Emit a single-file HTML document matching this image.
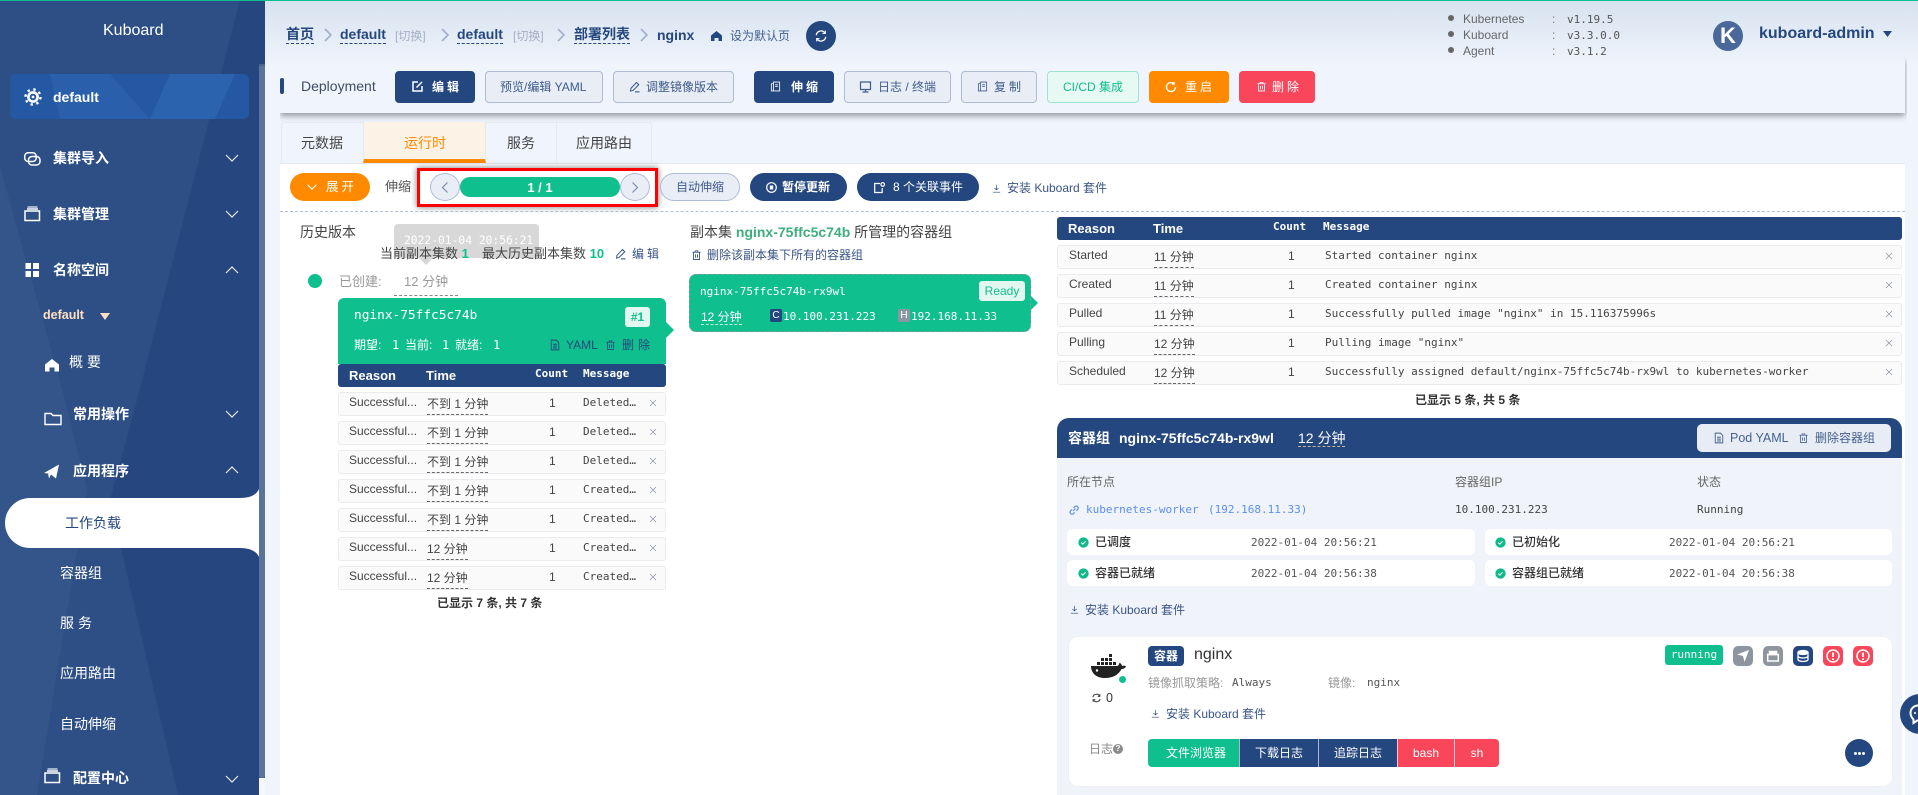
<!DOCTYPE html>
<html lang="zh"><head><meta charset="utf-8"><title>Kuboard</title>
<style>
html,body{margin:0;padding:0;width:1918px;height:795px;overflow:hidden;background:#f0f4fc}
body{position:relative;font-family:"Liberation Sans","Noto Sans CJK SC",sans-serif;font-size:12px;color:#333}
div,span.a,svg.i{position:absolute}
.t{position:absolute;white-space:nowrap;line-height:20px;height:20px}
.m{font-family:"DejaVu Sans Mono","Liberation Mono","Noto Sans CJK SC",monospace;font-size:11px}
.b{font-weight:700}
.n{color:#25477f}
.mi{color:#fff;font-weight:700;font-size:14px;left:53px}
.si{color:#fff;font-size:14px}
.btn{position:absolute;top:71px;height:32px;box-sizing:border-box;border-radius:4px}
.pl{background:#e9edf6;border:1px solid #aebbd5}
.nv{background:#25477f}
.rb{position:absolute;height:28px;top:173px;border-radius:14px;box-sizing:border-box}
.r{position:absolute;height:24px;box-sizing:border-box;background:#fafafa;border:1px solid #e9ebef;border-radius:3px}
.h{position:absolute;background:#25477f;border-radius:3px}
.dash{border-bottom:1px dashed #666;height:19px;line-height:19px}
svg.i{overflow:visible;fill:none;stroke:currentColor;stroke-width:1.2}
.x{color:#7f8c9a}
.cd{position:absolute;background:#fff;border-radius:6px;height:26px}
.sq{position:absolute;top:646px;width:20px;height:20px;border-radius:5px}
.lb{position:absolute;top:739px;height:28px;color:#fff;text-align:center;line-height:28px;font-size:12px;box-sizing:border-box}
</style></head><body>
<svg width="0" height="0" style="position:absolute">
<defs>
<symbol id="trash" viewBox="0 0 16 16"><path d="M2 4h12M6 4V2h4v2M3.5 4v10.5h9V4M6.5 7v5M9.5 7v5"/></symbol>
<symbol id="doc" viewBox="0 0 16 16"><path d="M3 1.5h7l3 3v10H3zM5.5 7h5M5.5 9.5h5M5.5 12h5"/></symbol>
<symbol id="pen" viewBox="0 0 16 16"><path d="M10 2l3 3-7.5 7.5-3.5 1 .7-3.8zM8 14.5h6"/></symbol>
<symbol id="dl" viewBox="0 0 16 16"><path d="M8 1.5v9M4.2 7L8 10.5 11.8 7M1.5 14.5h13"/></symbol>
<symbol id="copy" viewBox="0 0 16 16"><path d="M5 1.5h9v13H5zM5 4H2v10.5h3M7.5 5.5h4M7.5 8h4"/></symbol>
<symbol id="x" viewBox="0 0 16 16"><path d="M2 2l12 12M14 2L2 14"/></symbol>
<symbol id="chk" viewBox="0 0 16 16"><circle cx="8" cy="8" r="7.5" fill="#10b98a" stroke="none"/><path d="M4.8 8.2l2.2 2.2 4-4" stroke="#fff" stroke-width="1.6"/></symbol>
<symbol id="dn" viewBox="0 0 14 8"><path d="M1 1l6 6 6-6"/></symbol>
<symbol id="up" viewBox="0 0 14 8"><path d="M1 7l6-6 6 6"/></symbol>
</defs></svg>

<!-- top green line -->
<div style="left:0;top:0;width:1918px;height:1px;background:#0fbf8f;z-index:9"></div>

<!-- main background gradient -->
<div style="left:265px;top:0;width:1653px;height:66px;background:linear-gradient(#d6e2ef,#f0f4fc)"></div>

<!-- sidebar -->
<svg class="a" style="position:absolute;left:0;top:0" width="265" height="795">
<rect width="265" height="795" fill="#25467f"/>
<polygon points="0,0 240,0 137,400 110,500 178,795 37,795 0,795" fill="#2d4f85"/>
<polygon points="0,167 65,400 87,490 37,795 0,795" fill="#34558a"/>
<rect x="259" y="64" width="6" height="714" rx="2" fill="#5b7299"/>
<rect x="259" y="778" width="6" height="17" fill="#f6f8fc"/>
<rect x="259" y="64" width="6" height="2" fill="#4a648f"/>
<path d="M5 523A25 25 0 0 1 30 498H240Q255 498 259 489V557Q255 548 240 548H30A25 25 0 0 1 5 523Z" fill="#fff"/>
<rect x="10" y="74" width="239" height="45" rx="6" fill="#2558a3"/>
<polygon points="50,74 110,74 150,119 60,119" fill="#2a60ab"/>
<polygon points="170,74 235,74 215,119 150,119" fill="#2b63ae"/>
<g transform="translate(33,97)" fill="none" stroke="#fff">
<circle r="7.5" stroke-width="2.4" stroke-dasharray="2.4 3.5"/><circle r="4.6" stroke-width="2.6"/><circle r="1.4" fill="#fff" stroke="none"/></g>
<g fill="none" stroke="#fff" stroke-width="1.5">
<rect x="24.700" y="152.700" width="11.500" height="8.800" rx="3.500"/>
<rect x="28.500" y="156.500" width="11.500" height="8.500" rx="3.500"/>
<rect x="25" y="211" width="14.500" height="9.500"/>
<path d="M27 209h11"/><path d="M27.500 207h10" stroke="#c8d3e6"/>
<path d="M45 424.500v-11h6l2 2h8v9z" stroke-width="1.400"/>
<rect x="45" y="773" width="14.500" height="9.500"/>
<path d="M47 771h11"/><path d="M47.500 769h10" stroke="#c8d3e6"/>
</g>
<g fill="#fff">
<rect x="25.500" y="263" width="5.500" height="6"/><rect x="33" y="263" width="6" height="6"/>
<rect x="25.500" y="271" width="5.500" height="6"/><rect x="33" y="271" width="6" height="6"/>
<path d="M45 364.500l7-5.500 7 5.500v7h-4.500v-4h-5v4H45z"/>
<path d="M59 464.500l-3 14-5-4-2 4-1-5.500zM44 473l15-8.500-11 9z"/>
<polygon points="100,313 110,313 105,320" fill="#fde0c4"/>
</g>
<g fill="none" stroke="#e6ecf5" stroke-width="1.200">
<path d="M226 155l6 6 6-6M226 211l6 6 6-6M226 273l6-6 6 6M226 411l6 6 6-6M226 473l6-6 6 6M226 776l6 6 6-6"/>
</g>
</svg>
<div class="t" style="left:103px;top:21px;color:#fff;font-size:16px">Kuboard</div>
<div class="t b" style="left:53px;top:87px;color:#fff;font-size:14px">default</div>
<div class="t mi" style="top:148px">集群导入</div>
<div class="t mi" style="top:204px">集群管理</div>
<div class="t mi" style="top:260px">名称空间</div>
<div class="t b" style="left:43px;top:305px;color:#fde0c4;font-size:12.500px">default</div>
<div class="t si" style="left:69px;top:352px;letter-spacing:4px">概要</div>
<div class="t mi" style="left:73px;top:404px">常用操作</div>
<div class="t mi" style="left:73px;top:461px">应用程序</div>
<div class="t n" style="left:65px;top:513px;font-size:14px">工作负载</div>
<div class="t si" style="left:60px;top:563px;">容器组</div>
<div class="t si" style="left:60px;top:613px;letter-spacing:4px">服务</div>
<div class="t si" style="left:60px;top:663px">应用路由</div>
<div class="t si" style="left:60px;top:714px">自动伸缩</div>
<div class="t mi" style="left:73px;top:768px">配置中心</div>

<!-- breadcrumb -->
<div class="t b n dash" style="left:286px;top:25px;height:18px;font-size:14px;border-bottom-color:#25477f">首页</div>
<div class="t b n dash" style="left:340px;top:25px;height:18px;font-size:14px;border-bottom-color:#25477f">default</div>
<div class="t" style="left:395px;top:26px;color:#a5b0c5;font-size:12px">[切换]</div>
<div class="t b n dash" style="left:457px;top:25px;height:18px;font-size:14px;border-bottom-color:#25477f">default</div>
<div class="t" style="left:513px;top:26px;color:#a5b0c5;font-size:12px">[切换]</div>
<div class="t b n dash" style="left:574px;top:25px;height:18px;font-size:14px;border-bottom-color:#25477f">部署列表</div>
<div class="t b n" style="left:657px;top:25px;font-size:14px">nginx</div>
<svg class="i" style="left:324px;top:28px;color:#9fb0cb;stroke-width:1.600" width="8" height="14" viewBox="0 0 8 14"><path d="M1 1l6 6-6 6"/></svg>
<svg class="i" style="left:441px;top:28px;color:#9fb0cb;stroke-width:1.600" width="8" height="14" viewBox="0 0 8 14"><path d="M1 1l6 6-6 6"/></svg>
<svg class="i" style="left:557px;top:28px;color:#9fb0cb;stroke-width:1.600" width="8" height="14" viewBox="0 0 8 14"><path d="M1 1l6 6-6 6"/></svg>
<svg class="i" style="left:640px;top:28px;color:#9fb0cb;stroke-width:1.600" width="8" height="14" viewBox="0 0 8 14"><path d="M1 1l6 6-6 6"/></svg>
<svg class="i" style="left:711px;top:31px;fill:#25477f;stroke:none" width="11" height="10" viewBox="0 0 11 10"><path d="M0 4.500L5.500 0 11 4.500V10H7.500V7h-4v3H0z"/></svg>
<div class="t" style="left:730px;top:26px;font-size:12px;color:#45618f">设为默认页</div>
<div style="left:806px;top:21px;width:30px;height:30px;border-radius:50%;background:#25477f"></div>
<svg class="i" style="left:815px;top:30px;color:#fff;stroke-width:1.500" width="12" height="12" viewBox="0 0 14 14"><path d="M1.500 6A5.500 5.500 0 0 1 11.500 3.500M12.500 8A5.500 5.500 0 0 1 2.500 10.500"/><path d="M12 .8v3.200H8.800M2 13.200V10h3.200" stroke-width="1.300"/></svg>

<!-- versions -->
<div style="left:1448px;top:15px;width:6px;height:6px;border-radius:50%;background:#666"></div>
<div style="left:1448px;top:31px;width:6px;height:6px;border-radius:50%;background:#666"></div>
<div style="left:1448px;top:47px;width:6px;height:6px;border-radius:50%;background:#666"></div>
<div class="t" style="left:1463px;top:9px;color:#666">Kubernetes</div>
<div class="t" style="left:1463px;top:25px;color:#666">Kuboard</div>
<div class="t" style="left:1463px;top:41px;color:#666">Agent</div>
<div class="t" style="left:1552px;top:9px;color:#777">:</div>
<div class="t" style="left:1552px;top:25px;color:#777">:</div>
<div class="t" style="left:1552px;top:41px;color:#777">:</div>
<div class="t m" style="left:1567px;top:10px;color:#555">v1.19.5</div>
<div class="t m" style="left:1567px;top:26px;color:#555">v3.3.0.0</div>
<div class="t m" style="left:1567px;top:42px;color:#555">v3.1.2</div>
<div style="left:1713px;top:21px;width:30px;height:30px;border-radius:50%;background:#4a6899;color:#fff;font-weight:700;font-size:22px;text-align:center;line-height:30px">K</div>
<div class="t b n" style="left:1759px;top:24px;font-size:16px">kuboard-admin</div>
<svg class="i" style="left:1883px;top:31px;fill:#25477f;stroke:none" width="9" height="6"><polygon points="0,0 9,0 4.500,6"/></svg>

<!-- toolbar -->
<div style="left:280px;top:58px;width:1625px;height:55px;box-shadow:0 3px 6px rgba(0,0,0,.38);clip-path:inset(0 -2px -14px 0)"></div>
<div style="left:280px;top:78px;width:4px;height:16px;background:#25477f;border-radius:2px"></div>
<div class="t" style="left:301px;top:76px;font-size:14px;color:#3f4d63">Deployment</div>

<div class="btn nv" style="left:395px;width:80px"></div>
<svg class="i" style="left:412px;top:81px;color:#fff;stroke-width:1.500" width="11" height="11" viewBox="0 0 11 11"><path d="M6 1H1v9h9V5M4.500 6.500L10 1"/></svg>
<div class="t b" style="left:432px;top:77px;color:#fff;letter-spacing:3px">编辑</div>

<div class="btn pl" style="left:485px;width:118px"></div>
<div class="t n" style="left:500px;top:77px;color:#3f5c8c">预览/编辑 YAML</div>

<div class="btn pl" style="left:613px;width:121px"></div>
<svg class="i n" style="left:629px;top:81px" width="12" height="12"><use href="#pen"/></svg>
<div class="t" style="left:646px;top:77px;color:#3f5c8c">调整镜像版本</div>

<div class="btn nv" style="left:754px;width:80px"></div>
<svg class="i" style="left:770px;top:81px;color:#fff" width="11" height="11"><use href="#copy"/></svg>
<div class="t b" style="left:791px;top:77px;color:#fff;letter-spacing:3px">伸缩</div>

<div class="btn pl" style="left:844px;width:107px"></div>
<svg class="i" style="left:860px;top:81px;color:#3f5c8c" width="11" height="12" viewBox="0 0 11 12"><path d="M.5 1h10v7.500H.5zM5.500 8.500V11M2.500 11h6"/></svg>
<div class="t" style="left:878px;top:77px;color:#3f5c8c">日志 / 终端</div>

<div class="btn pl" style="left:961px;width:76px"></div>
<svg class="i" style="left:977px;top:81px;color:#3f5c8c" width="11" height="11"><use href="#copy"/></svg>
<div class="t" style="left:994px;top:77px;color:#3f5c8c;letter-spacing:3px">复制</div>

<div class="btn" style="left:1047px;width:92px;background:#e6f9f3;border:1px solid #9be6ce"></div>
<div class="t" style="left:1063px;top:77px;color:#10bf8e">CI/CD 集成</div>

<div class="btn" style="left:1149px;width:80px;background:#ff8a00"></div>
<svg class="i" style="left:1166px;top:82px;color:#fff;stroke-width:1.400" width="10" height="10" viewBox="0 0 10 10"><path d="M9.500 5A4.500 4.500 0 1 1 7.500 1.300M8 0v2H6"/></svg>
<div class="t b" style="left:1185px;top:77px;color:#fff;letter-spacing:3px;font-weight:400">重启</div>

<div class="btn" style="left:1239px;width:76px;background:#f9465b"></div>
<svg class="i" style="left:1256px;top:81px;color:#fff" width="11" height="11"><use href="#trash"/></svg>
<div class="t" style="left:1272px;top:77px;color:#fff;letter-spacing:3px">删除</div>

<!-- tabs -->
<div style="left:281px;top:122px;width:371px;height:41px;box-sizing:border-box;border:1px solid #e6e9f0;border-bottom:0;border-radius:3px 3px 0 0"></div>
<div style="left:363px;top:122px;width:123px;height:41px;box-sizing:border-box;background:#fdf2e6;border-bottom:4px solid #ff8a00;border-left:1px solid #e6e9f0;border-right:1px solid #e6e9f0"></div>
<div style="left:556px;top:122px;width:1px;height:41px;background:#e6e9f0"></div>
<div class="t" style="left:301px;top:133px;font-size:14px;color:#444">元数据</div>
<div class="t" style="left:404px;top:133px;font-size:14px;color:#ff8a00">运行时</div>
<div class="t" style="left:507px;top:133px;font-size:14px;color:#444">服务</div>
<div class="t" style="left:576px;top:133px;font-size:14px;color:#444">应用路由</div>

<!-- white panel -->
<div style="left:280px;top:163px;width:1625px;height:632px;background:#fff;border-top:1px solid #e6e9f0;box-sizing:border-box"></div>

<!-- control row -->
<div class="rb" style="left:290px;width:80px;background:#ff8a00"></div>
<svg class="i" style="left:307px;top:184px;color:#fff;stroke-width:1.400" width="10" height="6"><use href="#dn"/></svg>
<div class="t" style="left:326px;top:177px;color:#fff;letter-spacing:3px;font-size:12.500px">展开</div>
<div class="t" style="left:385px;top:177px;font-size:13px;color:#555">伸缩</div>

<div style="left:417px;top:168px;width:241px;height:39px;box-sizing:border-box;border:3px solid #f00;background:#fff;box-shadow:0 0 6px rgba(0,0,0,.55)"></div>
<div style="left:430px;top:173px;width:30px;height:28px;box-sizing:border-box;border-radius:50%;background:#e9edf6;border:1px solid #aebbd5"></div>
<div style="left:620px;top:173px;width:30px;height:28px;box-sizing:border-box;border-radius:50%;background:#e9edf6;border:1px solid #aebbd5"></div>
<svg class="i" style="left:442px;top:182px;color:#6f84a8;stroke-width:1" width="6" height="11" viewBox="0 0 6 11"><path d="M5.500.5l-5 5 5 5"/></svg>
<svg class="i" style="left:632px;top:182px;color:#6f84a8;stroke-width:1" width="6" height="11" viewBox="0 0 6 11"><path d="M.5.500l5 5-5 5"/></svg>
<div style="left:460px;top:177px;width:160px;height:20px;border-radius:10px;background:#10bf8e;color:#fff;font-weight:700;font-size:13px;line-height:22px;text-align:center">1 / 1</div>

<div class="rb pl" style="left:660px;width:80px"></div>
<div class="t" style="left:676px;top:177px;color:#3f5c8c">自动伸缩</div>
<div class="rb nv" style="left:750px;width:97px"></div>
<svg class="i" style="left:766px;top:182px;color:#fff" width="11" height="11" viewBox="0 0 11 11"><circle cx="5.500" cy="5.500" r="4.800"/><rect x="3.800" y="3.500" width="3.400" height="4" fill="#fff" stroke="none"/></svg>
<div class="t b" style="left:782px;top:177px;color:#fff">暂停更新</div>
<div class="rb nv" style="left:857px;width:122px"></div>
<svg class="i" style="left:874px;top:182px;color:#fff" width="11" height="11" viewBox="0 0 11 11"><path d="M6 1.500H.7v9h7.500V6"/><circle cx="8.700" cy="2.500" r="1.800"/></svg>
<div class="t b" style="left:893px;top:177px;color:#fff;font-weight:400">8 个关联事件</div>
<svg class="i n" style="left:992px;top:184px" width="9" height="9"><use href="#dl"/></svg>
<div class="t n" style="left:1007px;top:178px;color:#3a5586">安装 Kuboard 套件</div>
<div style="left:280px;top:211px;width:1625px;height:0;border-top:1px dashed #b4bfd3"></div>

<!-- left column -->
<div class="t" style="left:300px;top:222px;font-size:14px;color:#444">历史版本</div>
<div style="left:394px;top:224px;width:145px;height:34px;background:#d8d8d8;border-radius:4px"></div>
<svg class="i" style="left:419px;top:258px;fill:#d8d8d8;stroke:none" width="14" height="7"><polygon points="0,0 14,0 7,7"/></svg>
<div class="t m" style="left:404px;top:231px;color:#fff;font-size:11.300px">2022-01-04 20:56:21</div>
<div class="t" style="left:380px;top:244px;font-size:13px;color:#444">当前副本集数 <span style="color:#10bf8e;font-weight:700">1</span></div>
<div class="t" style="left:482px;top:244px;font-size:13px;color:#444">最大历史副本集数 <span style="color:#10bf8e;font-weight:700">10</span></div>
<svg class="i n" style="left:615px;top:248px" width="12" height="12"><use href="#pen"/></svg>
<div class="t n" style="left:632px;top:244px;font-size:12px;letter-spacing:3px;color:#3a5586">编辑</div>
<div style="left:308px;top:274px;width:14px;height:14px;border-radius:50%;background:#10bf8e"></div>
<div class="t" style="left:339px;top:272px;font-size:13px;color:#999">已创建:</div>
<div class="t" style="left:404px;top:272px;font-size:13px;color:#999">12 分钟</div>
<div style="left:394px;top:295px;width:64px;border-top:1px dashed #888"></div>

<div style="left:338px;top:298px;width:328px;height:66px;background:#10bf8e;border-radius:6px 6px 0 0"></div>
<svg class="i" style="left:666px;top:322px;fill:#10bf8e;stroke:none" width="8" height="16"><polygon points="0,0 8,8 0,16"/></svg>
<div class="t m" style="left:354px;top:306px;color:#fff;font-size:12.800px">nginx-75ffc5c74b</div>
<div style="left:625px;top:307px;width:25px;height:20px;background:#e2f7f0;border-radius:3px;color:#10bf8e;text-align:center;line-height:20px;font-weight:700">#1</div>
<div class="t" style="left:354px;top:335px;color:#fff">期望:</div><div class="t m" style="left:392px;top:335px;color:#fff;font-size:12px">1</div>
<div class="t" style="left:405px;top:335px;color:#fff">当前:</div><div class="t m" style="left:442px;top:335px;color:#fff;font-size:12px">1</div>
<div class="t" style="left:455px;top:335px;color:#fff">就绪:</div><div class="t m" style="left:493px;top:335px;color:#fff;font-size:12px">1</div>
<svg class="i n" style="left:549px;top:339px" width="12" height="12"><use href="#doc"/></svg>
<div class="t n" style="left:566px;top:335px">YAML</div>
<svg class="i n" style="left:605px;top:339px" width="11" height="12"><use href="#trash"/></svg>
<div class="t n" style="left:622px;top:335px;letter-spacing:4px">删除</div>

<div class="h" style="left:338px;top:364px;width:328px;height:23px"></div>
<div class="t b" style="left:349px;top:366px;color:#fff;font-size:13px">Reason</div>
<div class="t b" style="left:426px;top:366px;color:#fff;font-size:13px">Time</div>
<div class="t m b" style="left:535px;top:364px;color:#fff">Count</div>
<div class="t m b" style="left:583px;top:364px;color:#fff">Message</div>

<div class="r" style="left:338px;top:392px;width:328px"></div><div class="t" style="left:349px;top:392px;color:#444">Successful...</div><div class="t dash" style="left:427px;top:395px;color:#444">不到 1 分钟</div><div class="t" style="left:549px;top:393px;color:#444">1</div><div class="t m" style="left:583px;top:393px;color:#444">Deleted…</div><svg class="i x" style="left:649px;top:399px" width="8" height="8"><use href="#x"/></svg>
<div class="r" style="left:338px;top:421px;width:328px"></div><div class="t" style="left:349px;top:421px;color:#444">Successful...</div><div class="t dash" style="left:427px;top:424px;color:#444">不到 1 分钟</div><div class="t" style="left:549px;top:422px;color:#444">1</div><div class="t m" style="left:583px;top:422px;color:#444">Deleted…</div><svg class="i x" style="left:649px;top:428px" width="8" height="8"><use href="#x"/></svg>
<div class="r" style="left:338px;top:450px;width:328px"></div><div class="t" style="left:349px;top:450px;color:#444">Successful...</div><div class="t dash" style="left:427px;top:453px;color:#444">不到 1 分钟</div><div class="t" style="left:549px;top:451px;color:#444">1</div><div class="t m" style="left:583px;top:451px;color:#444">Deleted…</div><svg class="i x" style="left:649px;top:457px" width="8" height="8"><use href="#x"/></svg>
<div class="r" style="left:338px;top:479px;width:328px"></div><div class="t" style="left:349px;top:479px;color:#444">Successful...</div><div class="t dash" style="left:427px;top:482px;color:#444">不到 1 分钟</div><div class="t" style="left:549px;top:480px;color:#444">1</div><div class="t m" style="left:583px;top:480px;color:#444">Created…</div><svg class="i x" style="left:649px;top:486px" width="8" height="8"><use href="#x"/></svg>
<div class="r" style="left:338px;top:508px;width:328px"></div><div class="t" style="left:349px;top:508px;color:#444">Successful...</div><div class="t dash" style="left:427px;top:511px;color:#444">不到 1 分钟</div><div class="t" style="left:549px;top:509px;color:#444">1</div><div class="t m" style="left:583px;top:509px;color:#444">Created…</div><svg class="i x" style="left:649px;top:515px" width="8" height="8"><use href="#x"/></svg>
<div class="r" style="left:338px;top:537px;width:328px"></div><div class="t" style="left:349px;top:537px;color:#444">Successful...</div><div class="t dash" style="left:427px;top:540px;color:#444">12 分钟</div><div class="t" style="left:549px;top:538px;color:#444">1</div><div class="t m" style="left:583px;top:538px;color:#444">Created…</div><svg class="i x" style="left:649px;top:544px" width="8" height="8"><use href="#x"/></svg>
<div class="r" style="left:338px;top:566px;width:328px"></div><div class="t" style="left:349px;top:566px;color:#444">Successful...</div><div class="t dash" style="left:427px;top:569px;color:#444">12 分钟</div><div class="t" style="left:549px;top:567px;color:#444">1</div><div class="t m" style="left:583px;top:567px;color:#444">Created…</div><svg class="i x" style="left:649px;top:573px" width="8" height="8"><use href="#x"/></svg>
<div class="t b" style="left:437px;top:593px;color:#333">已显示 7 条, 共 7 条</div>

<!-- middle column -->
<div class="t" style="left:690px;top:222px;font-size:14px;color:#444">副本集 <span class="b" style="color:#3fae7f">nginx-75ffc5c74b</span> 所管理的容器组</div>
<svg class="i n" style="left:691px;top:249px" width="11" height="12"><use href="#trash"/></svg>
<div class="t n" style="left:707px;top:245px;color:#3a5586">删除该副本集下所有的容器组</div>
<div style="left:689px;top:274px;width:342px;height:58px;background:#10bf8e;border-radius:7px;box-sizing:border-box;border:1px dashed #7b9fa0"></div>
<svg class="i" style="left:1031px;top:296px;fill:#10bf8e;stroke:none" width="7" height="14"><polygon points="0,0 7,7 0,14"/></svg>
<div class="t m" style="left:700px;top:282px;color:#fff;font-size:11px">nginx-75ffc5c74b-rx9wl</div>
<div style="left:979px;top:281px;width:46px;height:20px;background:#e2f7f0;border-radius:3px;color:#10bf8e;text-align:center;line-height:20px">Ready</div>
<div class="t dash" style="left:701px;top:306px;color:#fff;border-bottom-color:#bdeee0;height:18px;line-height:22px">12 分钟</div>
<div style="left:770px;top:309px;width:12px;height:13px;background:#25477f;border-radius:2px;color:#fff;text-align:center;line-height:14px;font-size:10px">C</div>
<div class="t m" style="left:783px;top:307px;color:#fff;font-size:11px">10.100.231.223</div>
<div style="left:898px;top:309px;width:12px;height:13px;background:#8b95a3;border-radius:2px;color:#fff;text-align:center;line-height:14px;font-size:10px">H</div>
<div class="t m" style="left:911px;top:307px;color:#fff;font-size:11px">192.168.11.33</div>

<!-- right events -->
<div class="h" style="left:1057px;top:217px;width:845px;height:23px"></div>
<div class="t b" style="left:1068px;top:219px;color:#fff;font-size:13px">Reason</div>
<div class="t b" style="left:1153px;top:219px;color:#fff;font-size:13px">Time</div>
<div class="t m b" style="left:1273px;top:217px;color:#fff">Count</div>
<div class="t m b" style="left:1323px;top:217px;color:#fff">Message</div>

<div class="r" style="left:1057px;top:245px;width:845px"></div><div class="t" style="left:1069px;top:245px;color:#444">Started</div><div class="t dash" style="left:1154px;top:248px;color:#444">11 分钟</div><div class="t" style="left:1288px;top:246px;color:#444">1</div><div class="t m" style="left:1325px;top:246px;color:#444">Started container nginx</div><svg class="i x" style="left:1885px;top:252px" width="8" height="8"><use href="#x"/></svg>
<div class="r" style="left:1057px;top:274px;width:845px"></div><div class="t" style="left:1069px;top:274px;color:#444">Created</div><div class="t dash" style="left:1154px;top:277px;color:#444">11 分钟</div><div class="t" style="left:1288px;top:275px;color:#444">1</div><div class="t m" style="left:1325px;top:275px;color:#444">Created container nginx</div><svg class="i x" style="left:1885px;top:281px" width="8" height="8"><use href="#x"/></svg>
<div class="r" style="left:1057px;top:303px;width:845px"></div><div class="t" style="left:1069px;top:303px;color:#444">Pulled</div><div class="t dash" style="left:1154px;top:306px;color:#444">11 分钟</div><div class="t" style="left:1288px;top:304px;color:#444">1</div><div class="t m" style="left:1325px;top:304px;color:#444">Successfully pulled image "nginx" in 15.116375996s</div><svg class="i x" style="left:1885px;top:310px" width="8" height="8"><use href="#x"/></svg>
<div class="r" style="left:1057px;top:332px;width:845px"></div><div class="t" style="left:1069px;top:332px;color:#444">Pulling</div><div class="t dash" style="left:1154px;top:335px;color:#444">12 分钟</div><div class="t" style="left:1288px;top:333px;color:#444">1</div><div class="t m" style="left:1325px;top:333px;color:#444">Pulling image "nginx"</div><svg class="i x" style="left:1885px;top:339px" width="8" height="8"><use href="#x"/></svg>
<div class="r" style="left:1057px;top:361px;width:845px"></div><div class="t" style="left:1069px;top:361px;color:#444">Scheduled</div><div class="t dash" style="left:1154px;top:364px;color:#444">12 分钟</div><div class="t" style="left:1288px;top:362px;color:#444">1</div><div class="t m" style="left:1325px;top:362px;color:#444">Successfully assigned default/nginx-75ffc5c74b-rx9wl to kubernetes-worker</div><svg class="i x" style="left:1885px;top:368px" width="8" height="8"><use href="#x"/></svg>
<div class="t b" style="left:1415px;top:390px;color:#333">已显示 5 条, 共 5 条</div>

<!-- pod block -->
<div style="left:1057px;top:418px;width:845px;height:377px;background:#f0f3f9;border-radius:12px 12px 0 0"></div>
<div style="left:1057px;top:418px;width:845px;height:40px;background:#25477f;border-radius:12px 12px 0 0"></div>
<div class="t b" style="left:1068px;top:428px;color:#fff;font-size:14px">容器组</div>
<div class="t b" style="left:1119px;top:428px;color:#fff;font-size:14px">nginx-75ffc5c74b-rx9wl</div>
<div class="t dash" style="left:1298px;top:427px;color:#fff;font-size:14px;border-bottom-color:#c9b590;line-height:22px">12 分钟</div>
<div style="left:1697px;top:424px;width:194px;height:28px;background:#e8ecf5;border-radius:5px"></div>
<svg class="i" style="left:1713px;top:432px;color:#45618f" width="12" height="12"><use href="#doc"/></svg>
<div class="t" style="left:1730px;top:428px;color:#45618f;font-size:12.500px">Pod YAML</div>
<svg class="i" style="left:1798px;top:432px;color:#45618f" width="11" height="12"><use href="#trash"/></svg>
<div class="t" style="left:1815px;top:428px;color:#45618f">删除容器组</div>

<div class="t" style="left:1067px;top:472px;color:#666">所在节点</div>
<div class="t" style="left:1455px;top:472px;color:#666">容器组IP</div>
<div class="t" style="left:1697px;top:472px;color:#666">状态</div>
<svg class="i" style="left:1069px;top:505px;color:#5c92e8" width="10" height="10" viewBox="0 0 10 10"><path d="M4 6l2.500-2.500M3 4.500L1.500 6a2 2 0 0 0 2.800 2.800L5.800 7.300M4.500 3L6 1.500A2 2 0 0 1 8.800 4.300L7.300 5.800"/></svg>
<div class="t m" style="left:1086px;top:500px;color:#5a8fee">kubernetes-worker</div>
<div class="t m" style="left:1208px;top:500px;color:#5a8fee">(192.168.11.33)</div>
<div class="t m" style="left:1455px;top:500px;color:#444">10.100.231.223</div>
<div class="t m" style="left:1697px;top:500px;color:#444">Running</div>

<div class="cd" style="left:1067px;top:529px;width:408px"></div>
<svg class="i" style="left:1078px;top:537px" width="11" height="11"><use href="#chk"/></svg>
<div class="t b" style="left:1095px;top:532px;color:#333;font-weight:500">已调度</div>
<div class="t m" style="left:1251px;top:533px;color:#555">2022-01-04 20:56:21</div>
<div class="cd" style="left:1067px;top:560px;width:408px"></div>
<svg class="i" style="left:1078px;top:568px" width="11" height="11"><use href="#chk"/></svg>
<div class="t b" style="left:1095px;top:563px;color:#333;font-weight:500">容器已就绪</div>
<div class="t m" style="left:1251px;top:564px;color:#555">2022-01-04 20:56:38</div>
<div class="cd" style="left:1485px;top:529px;width:407px"></div>
<svg class="i" style="left:1495px;top:537px" width="11" height="11"><use href="#chk"/></svg>
<div class="t b" style="left:1512px;top:532px;color:#333;font-weight:500">已初始化</div>
<div class="t m" style="left:1669px;top:533px;color:#555">2022-01-04 20:56:21</div>
<div class="cd" style="left:1485px;top:560px;width:407px"></div>
<svg class="i" style="left:1495px;top:568px" width="11" height="11"><use href="#chk"/></svg>
<div class="t b" style="left:1512px;top:563px;color:#333;font-weight:500">容器组已就绪</div>
<div class="t m" style="left:1669px;top:564px;color:#555">2022-01-04 20:56:38</div>

<svg class="i n" style="left:1070px;top:605px" width="9" height="9"><use href="#dl"/></svg>
<div class="t" style="left:1085px;top:600px;color:#3a5586">安装 Kuboard 套件</div>

<!-- container card -->
<div style="left:1068px;top:636px;width:825px;height:151px;background:#fff;border-radius:10px;border:1px solid #edf0f5;box-sizing:border-box"></div>
<svg class="i" style="left:1091px;top:654px;fill:#222;stroke:none" width="35" height="25" viewBox="0 0 35 25">
<g><rect x="6" y="8" width="3" height="3"/><rect x="10" y="8" width="3" height="3"/><rect x="14" y="8" width="3" height="3"/><rect x="18" y="8" width="3" height="3"/><rect x="22" y="8" width="3" height="3"/>
<rect x="10" y="4" width="3" height="3"/><rect x="14" y="4" width="3" height="3"/><rect x="18" y="4" width="3" height="3"/><rect x="18" y="0" width="3" height="3"/></g>
<path d="M0 12h26c1 0 2-1 2.500-3.500 1.500 1 2.500 2.500 2.500 3.500 1.500-.5 3-.5 4 .5-1 2-3 2.500-4.500 2.500C28 20 23 24 14 24 5 24 0 19 0 12z"/><circle cx="6" cy="16.500" r="1.200" fill="#fff"/>
</svg>
<div style="left:1119px;top:676px;width:7px;height:7px;border-radius:50%;background:#10bf8e;box-shadow:0 0 0 1px #fff"></div>
<svg class="i" style="left:1092px;top:693px;color:#444" width="9" height="10" viewBox="0 0 10 10"><path d="M1 4A4 4 0 0 1 8.500 3M9 6A4 4 0 0 1 1.500 7M8.700.8v2.400H6.300M1.300 9.200V6.800h2.400"/></svg>
<div class="t" style="left:1106px;top:688px;color:#333;font-size:12.500px">0</div>
<div style="left:1148px;top:646px;width:36px;height:20px;background:#25477f;border-radius:4px;color:#fff;text-align:center;line-height:20px;font-weight:700">容器</div>
<div class="t" style="left:1194px;top:645px;font-size:16px;color:#333">nginx</div>
<div class="t" style="left:1148px;top:673px;color:#999">镜像抓取策略:</div>
<div class="t m" style="left:1232px;top:673px;color:#555">Always</div>
<div class="t" style="left:1328px;top:673px;color:#999">镜像:</div>
<div class="t m" style="left:1367px;top:673px;color:#555">nginx</div>
<svg class="i n" style="left:1151px;top:709px" width="9" height="9"><use href="#dl"/></svg>
<div class="t" style="left:1166px;top:704px;color:#3a5586">安装 Kuboard 套件</div>
<div class="t" style="left:1089px;top:739px;color:#888">日志</div>
<div style="left:1113px;top:744px;width:10px;height:10px;border-radius:50%;background:#8c8c8c;color:#fff;font-size:8px;line-height:10px;text-align:center;font-weight:700">?</div>
<div class="lb" style="left:1148px;width:91px;background:#10bf8e;border-radius:4px 0 0 4px;font-size:12px;padding-left:5px">文件浏览器</div>
<div class="lb" style="left:1239px;width:79px;background:#25477f;border-left:1px solid #aab8d3">下载日志</div>
<div class="lb" style="left:1318px;width:79px;background:#25477f;border-left:1px solid #aab8d3">追踪日志</div>
<div class="lb" style="left:1397px;width:57px;background:#f9465b;border-left:1px solid #f7c7cd;font-weight:500">bash</div>
<div class="lb" style="left:1454px;width:45px;background:#f9465b;border-left:1px solid #f7c7cd;border-radius:0 4px 4px 0">sh</div>
<div style="left:1665px;top:645px;width:58px;height:20px;background:#10bf8e;border-radius:3px;color:#fff;text-align:center;line-height:20px" class="m">running</div>
<div class="sq" style="left:1733px;background:#8f959e"></div>
<svg class="i" style="left:1736px;top:649px;fill:#fff;stroke:none" width="14" height="14" viewBox="0 0 14 14"><path d="M13 1L8.500 13 7 7 1 5.500z"/></svg>
<div class="sq" style="left:1763px;background:#8f959e"></div>
<svg class="i" style="left:1767px;top:650px;color:#fff;stroke-width:1.500" width="12" height="12" viewBox="0 0 12 12"><rect x=".7" y="4.500" width="10.600" height="6.500"/><path d="M2.500 1.500h7v3h-7z" fill="#fff"/></svg>
<div class="sq" style="left:1793px;background:#25477f"></div>
<svg class="i" style="left:1797px;top:650px;color:#fff;stroke-width:1.300" width="12" height="12" viewBox="0 0 12 12"><ellipse cx="6" cy="2.500" rx="5" ry="2" fill="#fff"/><path d="M1 2.500v7c0 1 2 2 5 2s5-1 5-2v-7M1 6c0 1 2 2 5 2s5-1 5-2"/></svg>
<div class="sq" style="left:1823px;background:#f9465b"></div>
<svg class="i" style="left:1826px;top:649px;color:#fff;stroke-width:1.500" width="14" height="14" viewBox="0 0 14 14"><circle cx="7" cy="7" r="6"/><path d="M7 3.500v4.500M7 9.500v1.500" stroke-width="1.800"/></svg>
<div class="sq" style="left:1853px;background:#f9465b"></div>
<svg class="i" style="left:1856px;top:649px;color:#fff;stroke-width:1.500" width="14" height="14" viewBox="0 0 14 14"><circle cx="7" cy="7" r="6"/><path d="M7 3.500v4.500M7 9.500v1.500" stroke-width="1.800"/></svg>
<div style="left:1845px;top:739px;width:28px;height:28px;border-radius:50%;background:#25477f"></div>
<div style="left:1854px;top:752px;width:3px;height:3px;border-radius:50%;background:#fff;box-shadow:4px 0 0 #fff,8px 0 0 #fff"></div>

<!-- chat fab -->
<div style="left:1900px;top:694px;width:40px;height:40px;border-radius:50%;background:#25477f"></div>
<svg class="i" style="left:1909px;top:704px;color:#fff;stroke-width:2" width="9" height="20" viewBox="0 0 9 20"><path d="M9 1.500a7.500 7.500 0 0 0-7.500 7.500c0 3 1.500 5 3 6.500V19L9 16"/><circle cx="6" cy="9" r="1" fill="#fff" stroke="none"/></svg>
</body></html>
